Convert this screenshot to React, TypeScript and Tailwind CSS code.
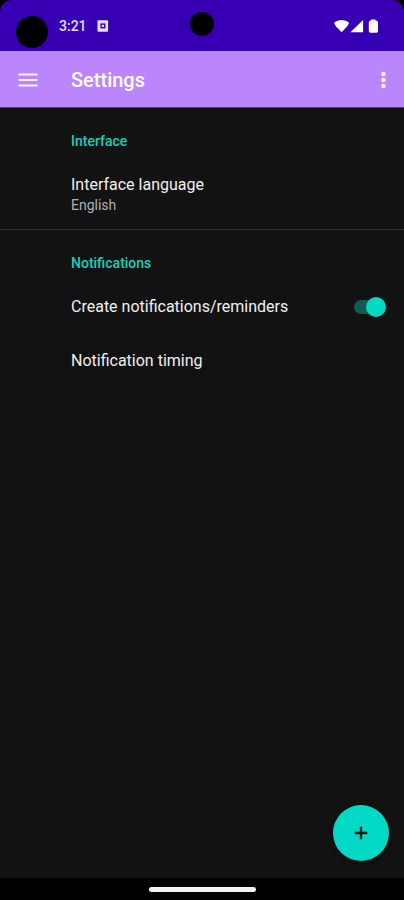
import { useState } from "react";

function StatusBar() {
  return (
    <div className="bg-black">
      <div className="relative flex h-[51px] items-center justify-between rounded-t-xl bg-[#3700b3] pr-6 pl-4">
        <div className="flex items-center">
          <div className="mt-3 size-8 rounded-full bg-black" />
          <span className="ml-[11px] text-sm font-medium text-[#e6dcf8]">3:21</span>
          <svg className="ml-[10px]" width="12" height="12" viewBox="0 0 12 12" aria-hidden="true">
            <rect x="0.5" y="0.3" width="10.6" height="11.4" rx="1" fill="#e6dcf8" />
            <rect x="3.4" y="3.4" width="5" height="5" fill="#3700b3" />
            <rect x="4.8" y="4.8" width="2.2" height="2.2" fill="#e6dcf8" />
          </svg>
        </div>

        {/* Camera */}
        <div className="absolute top-3 left-1/2 size-6 -translate-x-1/2 rounded-full bg-black" />

        <svg width="46" height="16" viewBox="0 0 46 16" fill="#ffffff" aria-hidden="true">
          <path d="M0.3 4.6C2.2 2.9 4.8 1.9 7.6 1.9S13 2.9 14.9 4.6C14.8 6.3 13.8 7.6 12.8 8.8L7.6 14.3L2.4 8.8C1.4 7.6 0.4 6.3 0.3 4.6Z" />
          <path d="M29.1 1.9V14.3H16.4Z" />
          <path d="M37.2 1.6H41.4V2.6H42.2Q44 3 44 4.6V13.1Q44 14.7 42.4 14.7H36.4Q34.8 14.7 34.8 13.1V4.6Q34.8 3 36.4 2.6H37.2Z" />
        </svg>
      </div>
    </div>
  );
}

function AppBar() {
  return (
    <header className="flex h-[57px] items-center border-b border-[#4d3a66] bg-[#bb86fc] pt-px pr-[11px] pl-4 text-white">
      <button type="button" aria-label="Open menu" className="flex size-6 items-center justify-center">
        <svg width="20" height="14" viewBox="0 0 20 14" fill="#f7efff">
          <rect x="0.5" y="0.5" width="19" height="2" />
          <rect x="0.5" y="6" width="19" height="2" />
          <rect x="0.5" y="11.5" width="19" height="2" />
        </svg>
      </button>
      <h1 className="ml-[31px] flex-1 text-xl font-medium">Settings</h1>
      <button type="button" aria-label="More options" className="flex h-6 w-5 items-center justify-center">
        <svg width="6" height="18" viewBox="0 0 6 18" fill="#f7efff">
          <circle cx="3.4" cy="3" r="2.3" />
          <circle cx="3.4" cy="9" r="2.3" />
          <circle cx="3.4" cy="15" r="2.3" />
        </svg>
      </button>
    </header>
  );
}

export default function App() {
  const [notify, setNotify] = useState(true);

  return (
    <div className="flex min-h-screen flex-col bg-[#121212] font-[Roboto,sans-serif] text-[#f0f0f0]">
      <StatusBar />
      <AppBar />

      <main className="flex-1">
        <section className="border-b border-[#303030] pt-[25px] pb-[14px] pl-[71px]">
          <h2 className="text-sm leading-4 font-medium text-[#12d1ba]">Interface</h2>
          <button type="button" className="mt-[26px] block w-full text-left">
            <span className="block text-base leading-5">Interface language</span>
            <span className="block text-sm leading-5 text-[#b0b0b0]">English</span>
          </button>
        </section>

        <section className="pt-[25px] pr-[18px] pl-[71px]">
          <h2 className="text-sm leading-4 font-medium text-[#12d1ba]">Notifications</h2>
          <label className="mt-[26px] flex items-center justify-between text-base leading-5">
            Create notifications/reminders
            <span className="relative flex h-5 w-8 items-center">
              <input
                type="checkbox"
                role="switch"
                checked={notify}
                onChange={(e) => setNotify(e.target.checked)}
                className="peer h-[14px] w-7 appearance-none rounded-full bg-[#444444] checked:bg-[#0f5b52]"
              />
              <span className="pointer-events-none absolute left-0 size-5 rounded-full bg-[#b9b9b9] transition-all peer-checked:left-3 peer-checked:bg-[#03dac5]" />
            </span>
          </label>
          <button type="button" className="mt-[34px] block w-full text-left text-base leading-5">
            Notification timing
          </button>
        </section>
      </main>

      <div className="flex justify-end pr-[15px] pb-[17px]">
        <button
          type="button"
          aria-label="Add"
          className="flex size-14 items-center justify-center rounded-full bg-[#03dac5] shadow-md shadow-black/30"
        >
          <svg width="14" height="14" viewBox="0 0 14 14" fill="#0b1d1b">
            <path d="M5.8 0.7H8.2V5.8H13.3V8.2H8.2V13.3H5.8V8.2H0.7V5.8H5.8Z" />
          </svg>
        </button>
      </div>

      <div className="flex h-[22px] items-center justify-center bg-black">
        <div className="h-[5px] w-[107px] rounded-full bg-[#f2f2f2]" />
      </div>
    </div>
  );
}
